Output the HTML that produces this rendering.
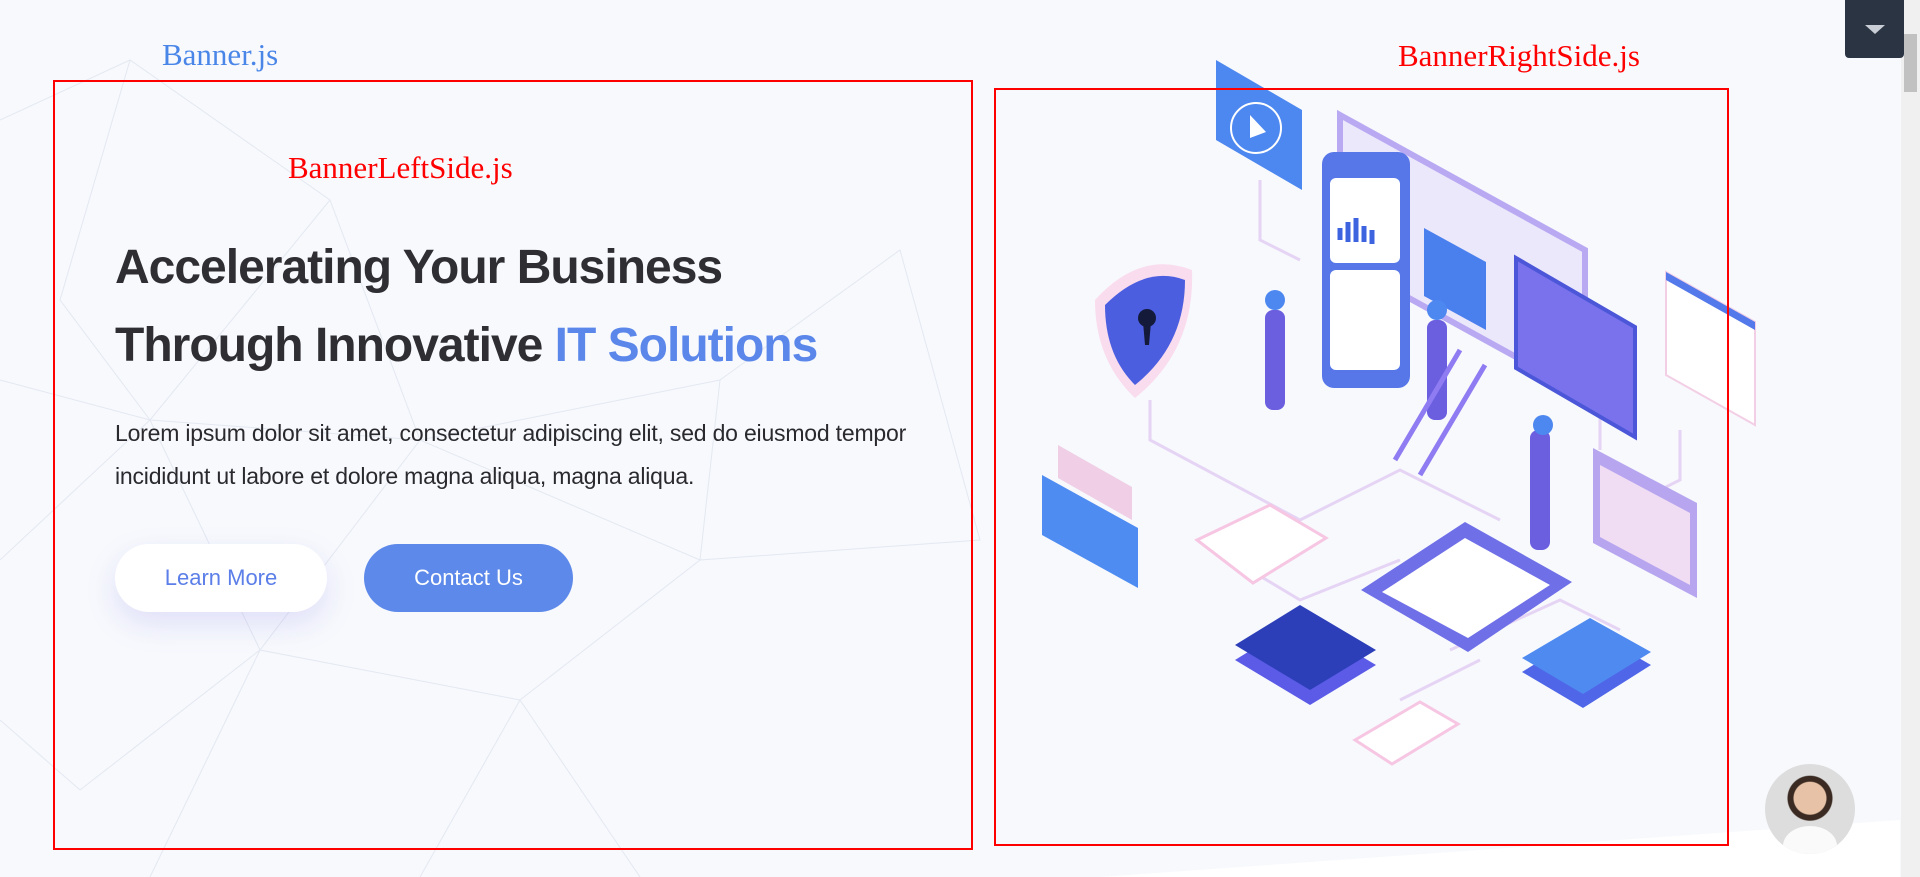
<!DOCTYPE html>
<html><head><meta charset="utf-8"><style>
*{margin:0;padding:0;box-sizing:border-box}
body{width:1920px;height:877px;overflow:hidden;background:#f7f9fd;position:relative;font-family:"Liberation Sans",sans-serif}
.bg{position:absolute;inset:0}
.box{position:absolute;border:2px solid #f00}
.lbl{position:absolute;font-family:"Liberation Serif",serif;font-size:31px;white-space:nowrap}
h1{position:absolute;left:115px;top:229px;font-size:48px;line-height:78px;font-weight:bold;color:#2f2f33;letter-spacing:-1px;white-space:nowrap}
h1 span{color:#5b87ea}
p{position:absolute;left:115px;top:412px;font-size:23px;line-height:43px;color:#2a2a2e;white-space:nowrap;letter-spacing:-.2px}
.btn{position:absolute;top:544px;height:68px;border-radius:34px;font-size:22px;display:flex;align-items:center;justify-content:center}
.b1{left:115px;width:212px;background:#fff;color:#5b7ee8;box-shadow:0 12px 30px rgba(120,110,230,.18)}
.b2{left:364px;width:209px;background:#5d89ea;color:#fff}
.top{position:absolute;left:1845px;top:0;width:59px;height:58px;background:#2b3442;border-radius:0 0 4px 4px}
.top:after{content:"";position:absolute;left:20px;top:25px;border:10px solid transparent;border-top:9px solid #c9ced6;border-bottom:0}
.sb{position:absolute;left:1901px;top:0;width:19px;height:877px;background:#f0f0f0}
.thumb{position:absolute;left:1904px;top:34px;width:13px;height:58px;background:#c1c1c1}
.av{position:absolute;left:1765px;top:764px;width:90px;height:90px;border-radius:50%;background:radial-gradient(circle at 50% 38%,#e8c2a6 0 16px,#3a2a22 17px 22px,transparent 23px),linear-gradient(#ddd,#ddd);overflow:hidden}
.av:after{content:"";position:absolute;left:18px;top:62px;width:54px;height:40px;border-radius:50% 50% 0 0;background:#fafafa}
</style></head><body>
<svg class="bg" width="1920" height="877">
<g stroke="#e4e8f1" stroke-width="1" fill="none">
<path d="M0 120 L130 60 L330 200 L150 420 L0 380 M130 60 L60 300 L150 420 L260 650 L80 790 L0 720 M330 200 L420 440 L260 650 L520 700 L420 877 M150 420 L420 440 L700 560 L520 700 L640 877 M700 560 L720 380 L420 440 M720 380 L900 250 L980 540 L700 560 M260 650 L150 877 M0 560 L150 420"/>
</g>
<path d="M1100 877 L1900 820 L1900 877Z" fill="#fff"/>
<g fill="none" stroke="#e6d4f4" stroke-width="3">
<path d="M1150 400 L1150 440 L1300 520 L1400 470 L1500 520 M1260 180 L1260 240 L1300 260 M1200 540 L1300 600 L1400 560 M1450 650 L1560 600 L1620 630 M1400 700 L1480 660 M1680 430 L1680 480 L1600 520 M1560 380 L1600 400 L1600 450"/>
</g>
<path d="M1340 115 L1585 250 L1585 395 L1340 260Z" fill="#ece8fb" stroke="#b9a9f2" stroke-width="6"/>
<path d="M1216 60 L1302 110 L1302 190 L1216 140Z" fill="#4d87f0"/>
<circle cx="1256" cy="128" r="25" fill="none" stroke="#fff" stroke-width="2"/><path d="M1250 115 L1266 132 L1250 138Z" fill="#fff"/>
<rect x="1322" y="152" width="88" height="236" rx="12" fill="#5777e8"/>
<rect x="1330" y="178" width="70" height="85" rx="6" fill="#fff"/>
<rect x="1330" y="270" width="70" height="100" rx="6" fill="#fff"/>
<g stroke="#3e63e0" stroke-width="5"><path d="M1340 228v12M1348 222v20M1356 218v24M1364 226v16M1372 230v14"/></g>
<path d="M1424 228 L1486 262 L1486 330 L1424 296Z" fill="#4a80ee"/>
<path d="M1516 258 L1635 327 L1635 437 L1516 368Z" fill="#7a72ec" stroke="#4b57d8" stroke-width="4"/>
<path d="M1666 272 L1755 322 L1755 425 L1666 375Z" fill="#fff" stroke="#f3cfe6" stroke-width="2"/><path d="M1666 272 L1755 322 L1755 330 L1666 280Z" fill="#5479ea"/>
<path d="M1095 300 Q1140 250 1192 270 Q1195 350 1135 398 Q1095 360 1095 300Z" fill="#fadcef"/>
<path d="M1105 305 Q1145 265 1185 280 Q1185 345 1135 385 Q1105 355 1105 305Z" fill="#4b5ee0"/>
<circle cx="1147" cy="318" r="9" fill="#141a3a"/><path d="M1143 322 L1151 322 L1149 345 L1145 345Z" fill="#141a3a"/>
<g fill="#6b5fe0"><rect x="1265" y="310" width="20" height="100" rx="8"/><rect x="1427" y="320" width="20" height="100" rx="8"/><rect x="1530" y="430" width="20" height="120" rx="8"/></g>
<g fill="#4d87f0"><circle cx="1275" cy="300" r="10"/><circle cx="1437" cy="310" r="10"/><circle cx="1543" cy="425" r="10"/></g>
<path d="M1395 460 L1460 350 M1420 475 L1485 365" stroke="#8f7cf2" stroke-width="5"/>
<path d="M1042 475 L1138 528 L1138 588 L1042 535Z" fill="#4e8cf2"/>
<path d="M1058 445 L1132 487 L1132 520 L1058 478Z" fill="#f0cfe6"/>
<path d="M1593 448 L1697 503 L1697 598 L1593 543Z" fill="#b7a6ef"/>
<path d="M1600 465 L1690 513 L1690 585 L1600 537Z" fill="#f1ddf3"/>
<path d="M1197 540 L1270 505 L1326 538 L1253 583Z" fill="#fff" stroke="#f6c6e3" stroke-width="3"/>
<path d="M1361 590 L1465 522 L1572 582 L1468 652Z" fill="#6f6fe8"/>
<path d="M1382 592 L1465 538 L1550 585 L1468 638Z" fill="#fff"/>
<path d="M1235 660 L1300 620 L1376 665 L1310 705Z" fill="#5b5be8"/>
<path d="M1235 645 L1300 605 L1376 650 L1310 690Z" fill="#2c3fb8"/>
<path d="M1522 672 L1590 630 L1651 665 L1583 708Z" fill="#4f66e8"/>
<path d="M1522 658 L1590 618 L1651 652 L1583 694Z" fill="#4f8af0"/>
<path d="M1355 740 L1420 702 L1458 724 L1392 764Z" fill="#fff" stroke="#f6c6e3" stroke-width="3"/>
</svg>
<div class="box" style="left:53px;top:80px;width:920px;height:770px"></div>
<div class="box" style="left:994px;top:88px;width:735px;height:758px"></div>
<div class="lbl" style="left:162px;top:37px;color:#4a86e8">Banner.js</div>
<div class="lbl" style="left:288px;top:150px;color:#f00">BannerLeftSide.js</div>
<div class="lbl" style="left:1398px;top:38px;color:#f00">BannerRightSide.js</div>
<h1>Accelerating Your Business<br>Through Innovative <span>IT Solutions</span></h1>
<p>Lorem ipsum dolor sit amet, consectetur adipiscing elit, sed do eiusmod tempor<br>incididunt ut labore et dolore magna aliqua, magna aliqua.</p>
<div class="btn b1">Learn More</div>
<div class="btn b2">Contact Us</div>
<div class="sb"></div><div class="thumb"></div>
<div class="top"></div>
<div class="av"></div>
</body></html>
